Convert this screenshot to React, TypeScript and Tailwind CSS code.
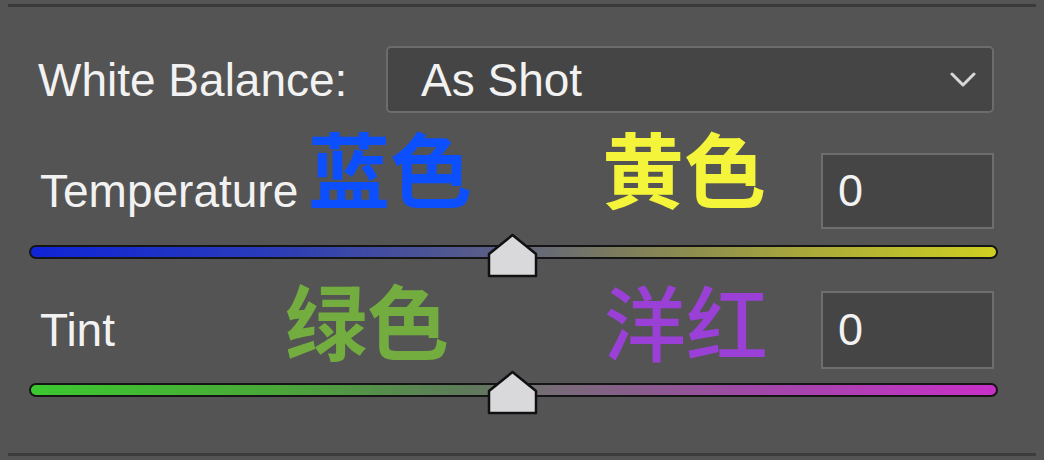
import React from "react";

const sans = { fontFamily: '"Liberation Sans", Arial, "Noto Sans CJK SC", sans-serif' };
const cjk = { fontFamily: '"Noto Sans CJK SC", "Noto Sans", sans-serif' };

function Thumb() {
  return (
    <svg width="51" height="45" viewBox="0 0 51 45" className="absolute left-[487px] top-[-1px]">
      <path d="M2 21 L25.5 2 L49 21 L49 43 L2 43 Z" fill="#d9d9dc" stroke="#111" strokeWidth="2.5" strokeLinejoin="round" />
    </svg>
  );
}

function Slider({ gradient, trackTop }: { gradient: string; trackTop: string }) {
  return (
    <div className="relative h-[44px] w-full">
      <div
        className={`absolute left-[29px] w-[969px] h-[14px] rounded-full border-2 border-[#151515] ${trackTop}`}
        style={{ background: gradient }}
      />
      <Thumb />
    </div>
  );
}

function NumberBox() {
  return (
    <div className="w-[173px] h-full bg-[#454545] border-2 border-[#6e6e6e] flex items-center pl-[15px] text-[45px] text-[#f2f2f2]" style={sans}>
      0
    </div>
  );
}

export default function App() {
  return (
    <div className="w-[1044px] h-[460px] bg-[#545454] overflow-hidden flex flex-col pt-[4px]" style={sans}>
      <div className="mx-[8px] h-[3px] bg-[#3a3a3a]" />

      {/* White balance row */}
      <div className="mt-[39px] h-[67px] flex items-center">
        <div className="pl-[38px] w-[386px] text-[46px] text-[#f2f2f2] leading-none">White Balance:</div>
        <div className="w-[608px] h-full rounded-[5px] bg-[#454545] border-2 border-[#6c6c6c] flex items-center justify-between pl-[33px] pr-[16px]">
          <span className="text-[46px] text-[#f2f2f2] leading-none">As Shot</span>
          <svg width="26" height="18" viewBox="0 0 26 18">
            <path d="M2 3 L13 14 L24 3" fill="none" stroke="#d8d8d8" strokeWidth="3" strokeLinecap="round" strokeLinejoin="round" />
          </svg>
        </div>
      </div>

      {/* Temperature row */}
      <div className="mt-[40px] h-[76px] flex items-center relative">
        <div className="pl-[40px] w-[821px] text-[46px] text-[#f2f2f2] leading-none">Temperature</div>
        <NumberBox />
        <span className="absolute left-[308px] top-[-27px] text-[82px] leading-none font-bold text-[#0b4fff]" style={cjk}>蓝色</span>
        <span className="absolute left-[602px] top-[-27px] text-[82px] leading-none font-bold text-[#f4f43a]" style={cjk}>黄色</span>
      </div>

      <div className="mt-[5px]">
        <Slider
          trackTop="top-[11px]"
          gradient="linear-gradient(to right, #1024d8 0%, #2a3cb8 25%, #5a5e86 48%, #7a7a60 60%, #a8a83a 80%, #cfcf22 100%)"
        />
      </div>

      {/* Tint row */}
      <div className="mt-[13px] h-[78px] flex items-center relative">
        <div className="pl-[40px] w-[821px] text-[46px] text-[#f2f2f2] leading-none">Tint</div>
        <NumberBox />
        <span className="absolute left-[285px] top-[-13px] text-[82px] leading-none font-semibold text-[#74ad3f]" style={cjk}>绿色</span>
        <span className="absolute left-[604px] top-[-12px] text-[82px] leading-none font-medium text-[#9a40d6]" style={cjk}>洋红</span>
      </div>

      <div className="mt-[2px]">
        <Slider
          trackTop="top-[12px]"
          gradient="linear-gradient(to right, #3cc830 0%, #4aa838 25%, #5e7a5a 45%, #7a6a7a 55%, #a048a8 75%, #c830c8 100%)"
        />
      </div>

      <div className="mt-[38px] mx-[8px] h-[3px] bg-[#3c3c3c]" />
    </div>
  );
}
